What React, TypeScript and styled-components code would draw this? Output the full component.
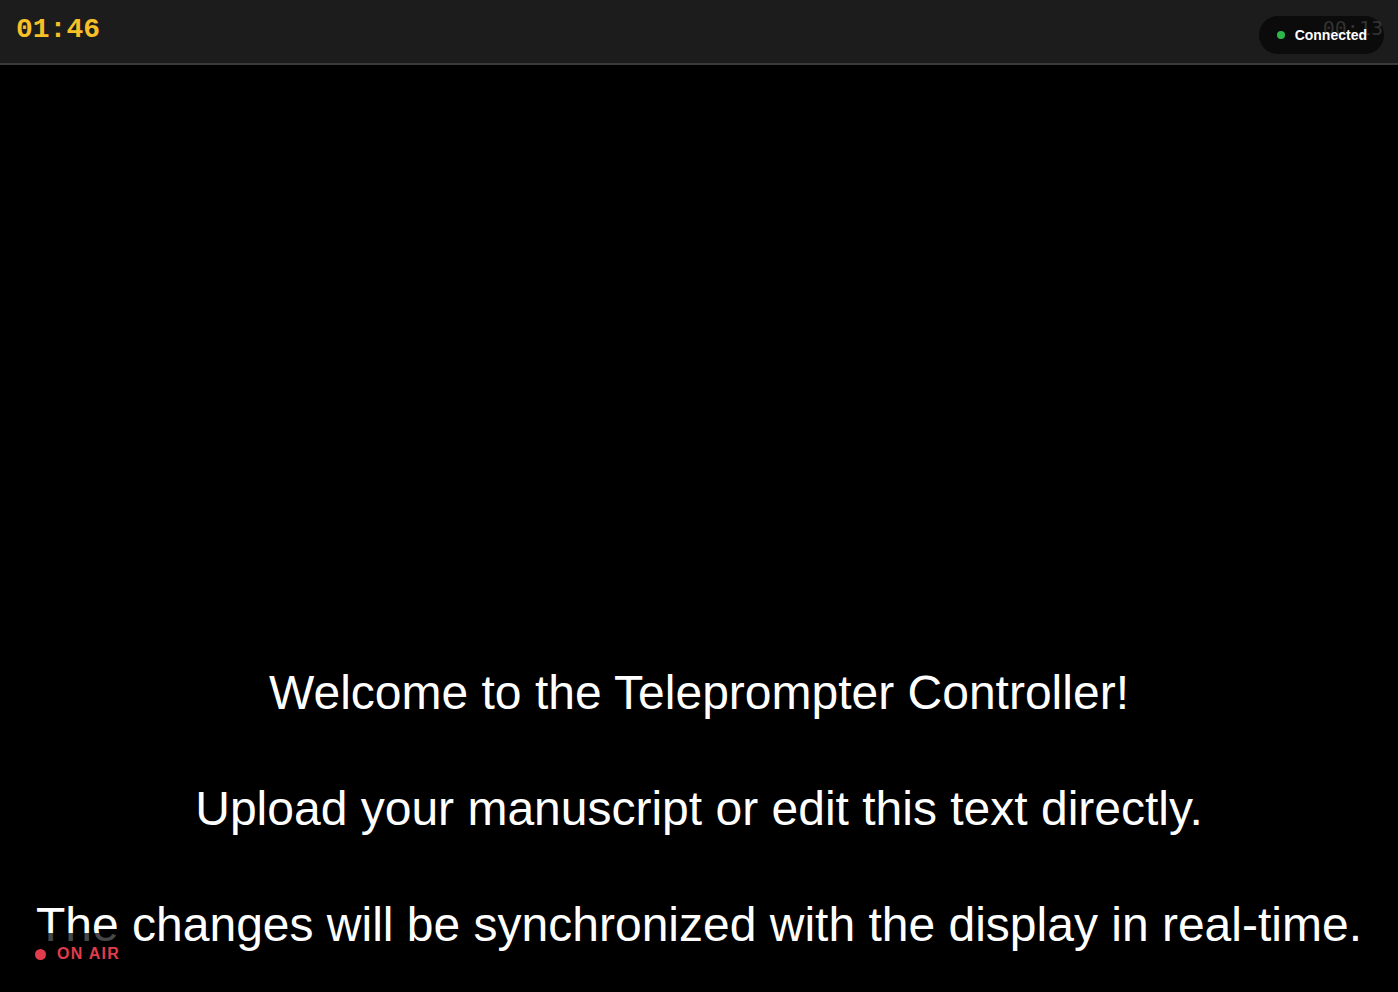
import { createGlobalStyle, styled } from 'styled-components';

const script = [
  'Welcome to the Teleprompter Controller!',
  '',
  'Upload your manuscript or edit this text directly.',
  '',
  'The changes will be synchronized with the display in real-time.',
];

export default function App() {
  return (
    <>
      <GlobalStyle />
      <StyledPage>
        <StyledHeader>
          <StyledClock>01:46</StyledClock>
          <StyledStatus>
            <StyledDot $color="#2eb84b" $size={8} />
            Connected
          </StyledStatus>
          <StyledElapsed>00:13</StyledElapsed>
        </StyledHeader>
        <StyledStage>
          <StyledScript>{script.join('\n')}</StyledScript>
        </StyledStage>
        <StyledOnAir>
          <StyledDot $color="#e03c4c" $size={11} />
          ON AIR
        </StyledOnAir>
      </StyledPage>
    </>
  );
}

const GlobalStyle = createGlobalStyle`
  html, body {
    margin: 0;
    padding: 0;
    background: #000;
    overflow: hidden;
  }
  body {
    font-family: "Liberation Sans", Arial, sans-serif;
  }
`;

const StyledPage = styled.div`
  position: relative;
  width: 1398px;
  height: 992px;
  display: flex;
  flex-direction: column;
  background: #000;
  overflow: hidden;
`;

const StyledHeader = styled.header`
  position: relative;
  height: 63px;
  flex-shrink: 0;
  display: flex;
  align-items: center;
  justify-content: space-between;
  padding: 0 15px 0 16px;
  background: #1c1c1c;
  border-bottom: 2px solid #3a3a3a;
`;

const StyledClock = styled.div`
  font-family: "Liberation Mono", "Courier New", monospace;
  font-weight: 700;
  font-size: 28px;
  color: #f6c026;
  margin-top: -5px;
`;

const StyledStatus = styled.div`
  display: flex;
  align-items: center;
  gap: 10px;
  height: 38px;
  padding: 0 17px 0 18px;
  margin-right: -1px;
  border-radius: 19px;
  background: #0b0b0b;
  color: #fff;
  font-size: 14px;
  font-weight: 700;
  margin-top: 6px;
`;

const StyledDot = styled.span<{ $color: string; $size: number }>`
  display: inline-block;
  width: ${(props) => props.$size}px;
  height: ${(props) => props.$size}px;
  border-radius: 50%;
  background: ${(props) => props.$color};
`;

const StyledElapsed = styled.div`
  position: absolute;
  top: 16px;
  right: 15px;
  font-family: "DejaVu Sans Mono", monospace;
  font-weight: 300;
  font-size: 20px;
  color: rgba(255, 255, 255, 0.17);
  pointer-events: none;
`;

const StyledStage = styled.main`
  flex: 1;
  padding: 599px 20px 0;
  overflow: hidden;
`;

const StyledScript = styled.div`
  white-space: pre-wrap;
  text-align: center;
  color: #fff;
  font-size: 48px;
  line-height: 58px;
`;

const StyledOnAir = styled.div`
  position: absolute;
  left: 26px;
  bottom: 17px;
  display: flex;
  align-items: center;
  gap: 11px;
  padding: 12px 10px 12px 9px;
  border-radius: 6px;
  background: rgba(0, 0, 0, 0.72);
  color: #e03c4c;
  font-size: 16px;
  font-weight: 700;
  letter-spacing: 1.3px;
`;
